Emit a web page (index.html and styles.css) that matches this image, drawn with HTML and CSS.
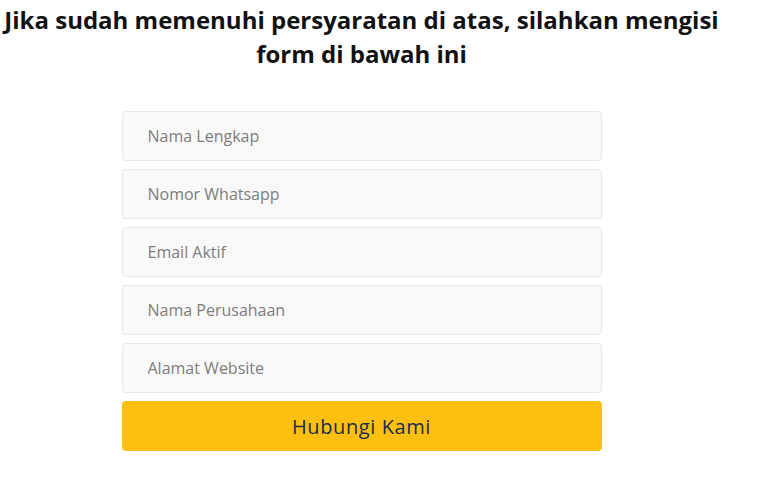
FILE: index.html
```html
<!DOCTYPE html>
<html lang="id">
<head>
<meta charset="utf-8">
<title>Form</title>
<link rel="stylesheet" href="styles.css">
</head>
<body>
<div class="page">
  <h2 class="title">Jika sudah memenuhi persyaratan di atas, silahkan mengisi form di bawah ini</h2>
  <form class="form">
    <input class="field" type="text" placeholder="Nama Lengkap">
    <input class="field" type="text" placeholder="Nomor Whatsapp">
    <input class="field" type="email" placeholder="Email Aktif">
    <input class="field" type="text" placeholder="Nama Perusahaan">
    <input class="field" type="text" placeholder="Alamat Website">
    <button class="submit" type="button">Hubungi Kami</button>
  </form>
</div>
</body>
</html>
```
FILE: styles.css
```css
html, body {
  margin: 0;
  padding: 0;
  background: #ffffff;
}
.page {
  width: 723px;
  font-family: "Open Sans", sans-serif;
}
.title {
  margin: 0;
  padding-top: 3px;
  font-size: 24px;
  font-weight: 700;
  line-height: 34px;
  color: #111;
  text-align: center;
}
.form {
  width: 480px;
  margin: 40px auto 0;
  display: flex;
  flex-direction: column;
  gap: 8px;
}
.field {
  box-sizing: border-box;
  height: 50px;
  width: 100%;
  padding: 0 25px;
  border: 1px solid #e8e8e8;
  border-radius: 4px;
  background: #f9f9f9;
  font-family: "Open Sans", sans-serif;
  font-size: 16px;
  font-weight: 400;
  color: #333;
  outline: none;
}
.field::placeholder {
  color: #7d7d7d;
  opacity: 1;
}
.submit {
  height: 50px;
  width: 100%;
  border: none;
  border-radius: 4px;
  background: #fdc010;
  color: #1f2a4d;
  font-family: "Open Sans", sans-serif;
  font-size: 20px;
  font-weight: 400;
  letter-spacing: 0.6px;
  padding-top: 2px;
  cursor: pointer;
}
```
